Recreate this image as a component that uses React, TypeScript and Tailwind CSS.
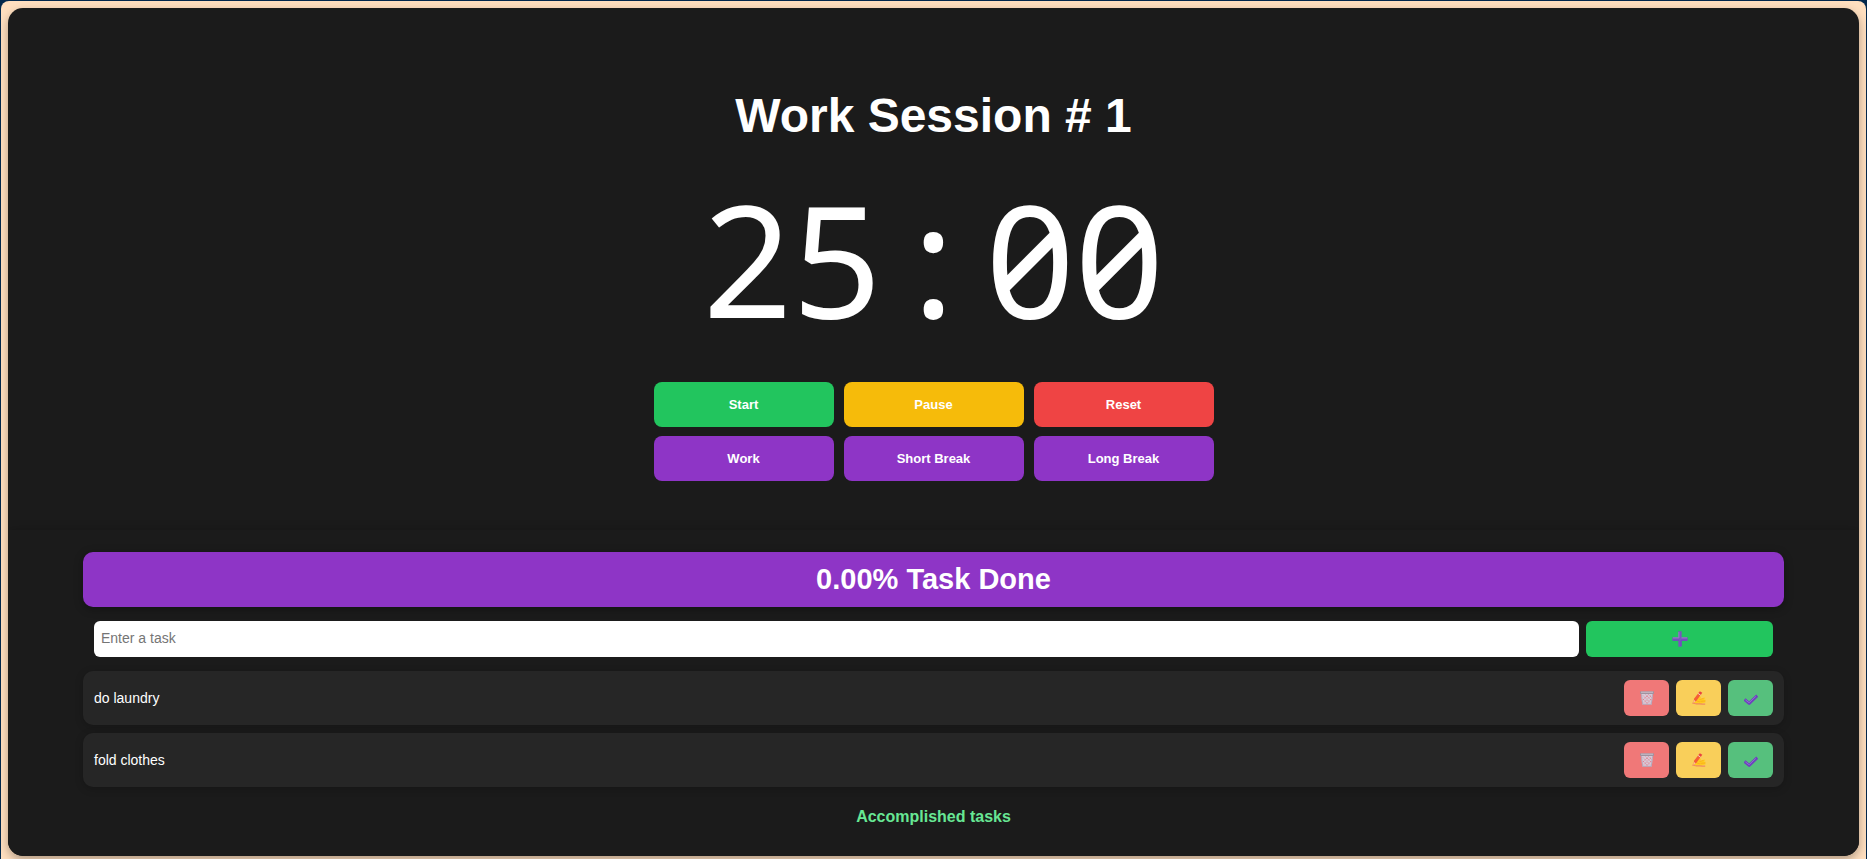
import { useState } from "react";

function PlusIcon() {
  return (
    <svg width="16" height="16" viewBox="0 0 16 16" aria-hidden="true">
      <path d="M6.6.6h2.8v6h6v2.8h-6v6H6.6v-6h-6V6.6h6z" fill="#7a56bd" stroke="#7a56bd" strokeWidth=".5" strokeLinejoin="round" />
      <path d="M6.9.9v6H.9M9.4 6.9h5.7" fill="none" stroke="#a08fc4" strokeWidth=".8" />
      <path d="M9.1 9.4v5.6M.9 9.2h6M9.2 9.2h5.9" fill="none" stroke="#7040c8" strokeWidth=".8" />
    </svg>
  );
}

function TrashIcon() {
  return (
    <svg width="14" height="14" viewBox="0 0 14 14" aria-hidden="true">
      <path d="M1 2h12l-1.3 11.6H2.3z" fill="#d6cbd8" />
      <path d="M3 4.5l7.6 7.6M5.6 3.6l5.8 5.8M8.5 3.6l3.4 3.4M3.2 8.2l4.6 4.8M11 4.5l-7.6 7.6M8.4 3.6L2.6 9.4M11.4 8l-5 5" stroke="#e67585" strokeWidth=".8" fill="none" strokeDasharray="1.2 .9" />
      <path d="M1.4 3.2l1.3 10.1h8.6l1.3-10.1" fill="none" stroke="#b3a4b8" strokeWidth=".9" />
      <rect x="0" y=".2" width="14" height="2.8" rx=".8" fill="#a0929f" />
      <path d="M1 1.2h12" stroke="#d5cbd8" strokeWidth=".8" />
    </svg>
  );
}

function WritingIcon() {
  return (
    <svg width="14" height="14" viewBox="0 0 14 14" aria-hidden="true">
      <path d="M2 12L4.2 8.4l3.2-3 1.7.3-.8 2.4 4-1.7 1 .6-1.5 1.4 1.7.3-.3 1.5.4 1-2.6.9-1.7 1-4.5.2z" fill="#ffcb1f" />
      <path d="M7.4 8.6l4.2-1.2M8.4 10.3l5-.3M5 10l2.8.8" stroke="#f6a01a" strokeWidth=".6" fill="none" />
      <path d="M.4 12.4c1.5-.9 2.6.9 4.4.5 2-.5 3.8.5 8.4.3" stroke="#ef8a62" strokeWidth="1.3" fill="none" />
      <path d="M1.4 11.4l.8-3.8 4.7-6 2.3 1.7-4.9 6.8z" fill="#f45f36" />
      <path d="M6.6 2L7.9.2l2.4 1.5L9 3.6z" fill="#e8413e" />
      <path d="M6.2 2.5l2.4 1.7" stroke="#f3ddd8" strokeWidth=".9" />
      <path d="M1.4 11.5l.6-2.6 1.7 1.3z" fill="#ffc9a0" />
    </svg>
  );
}

function CheckIcon() {
  return (
    <svg width="14" height="14" viewBox="0 0 14 14" aria-hidden="true">
      <path d="M1.7 9.4l3.5 3 7-6.7" fill="none" stroke="#6f41bf" strokeWidth="3" strokeLinejoin="round" strokeLinecap="square" />
      <path d="M1.4 8.9l3.7 2.8 6.7-6.3" fill="none" stroke="#8d6fd0" strokeWidth="1" />
    </svg>
  );
}

const timerButtons = [
  { label: "Start", color: "bg-[#22c55e]" },
  { label: "Pause", color: "bg-[#f6bb0a]" },
  { label: "Reset", color: "bg-[#ef4444]" },
  { label: "Work", color: "bg-[#8e35c6]" },
  { label: "Short Break", color: "bg-[#8e35c6]" },
  { label: "Long Break", color: "bg-[#8e35c6]" },
];

function TimerSection() {
  return (
    <section className="flex flex-col items-center px-4 pt-20 pb-[49px]">
      <h1 className="text-[48px] leading-[56px] font-bold">Work Session # 1</h1>
      <time className="mt-[34px] flex font-['Noto_Sans',sans-serif] text-[156px] leading-[160px] slashed-zero">
        <span>25</span>
        <span className="w-[104px] text-center">:</span>
        <span>00</span>
      </time>
      <div className="mt-11 grid grid-cols-[repeat(3,180px)] gap-x-2.5 gap-y-[9px]">
        {timerButtons.map((b) => (
          <button key={b.label} type="button" className={`h-[45px] rounded-lg text-[13px] font-bold ${b.color}`}>
            {b.label}
          </button>
        ))}
      </div>
    </section>
  );
}

function TaskRow({ name }: { name: string }) {
  const button = "flex h-9 w-[45px] items-center justify-center rounded-md";
  return (
    <li className="flex h-[54px] items-center gap-[7px] rounded-[10px] bg-[#262626] px-[11px] shadow-[0_2px_8px_rgba(0,0,0,0.2)]">
      <span className="flex-1">{name}</span>
      <button type="button" aria-label="Delete" className={`${button} bg-[#f07878]`}><TrashIcon /></button>
      <button type="button" aria-label="Edit" className={`${button} bg-[#f9cf5a]`}><WritingIcon /></button>
      <button type="button" aria-label="Done" className={`${button} bg-[#56c07d]`}><CheckIcon /></button>
    </li>
  );
}

export default function App() {
  const [tasks, setTasks] = useState(["do laundry", "fold clothes"]);
  const [draft, setDraft] = useState("");

  return (
    <div className="min-h-screen bg-[#03284c] px-px pt-px font-['Liberation_Sans',Arial,sans-serif] text-[14px] leading-5 text-white">
      <div className="rounded-t-lg bg-[#ffdfbf] px-[7px] pt-[7px] pb-[3px]">
        <main className="overflow-hidden rounded-[15px] bg-[#1b1b1b] shadow-[0_4px_10px_rgba(0,0,0,0.3)]">
          <TimerSection />
          <section className="bg-[#1b1b1b] px-[75px] pt-[22px] pb-[27px] shadow-[0_0_10px_rgba(0,0,0,0.2)]">
            <h2 className="flex h-[55px] items-center justify-center rounded-[10px] bg-[#8e35c6] pb-0.5 text-[29px] font-bold shadow-[0_2px_10px_rgba(0,0,0,0.3)]">
              0.00% Task Done
            </h2>
            <form
              className="mt-3.5 flex gap-[7px] px-[11px]"
              onSubmit={(e) => {
                e.preventDefault();
                if (draft.trim()) setTasks([...tasks, draft.trim()]);
                setDraft("");
              }}
            >
              <input
                type="text"
                aria-label="Enter a task"
                placeholder="Enter a task"
                value={draft}
                onChange={(e) => setDraft(e.target.value)}
                className="h-9 min-w-0 flex-1 rounded-md bg-white px-[7px] pb-0.5 text-black placeholder:text-[#757575]"
              />
              <button type="submit" aria-label="Add task" className="flex h-9 w-[187px] items-center justify-center rounded-md bg-[#22c55e]">
                <PlusIcon />
              </button>
            </form>
            <ul className="mt-3.5 flex flex-col gap-2">
              {tasks.map((t) => (
                <TaskRow key={t} name={t} />
              ))}
            </ul>
            <h3 className="mt-[18px] text-center text-[16px] leading-6 font-bold text-[#67e794]">Accomplished tasks</h3>
          </section>
        </main>
      </div>
    </div>
  );
}
